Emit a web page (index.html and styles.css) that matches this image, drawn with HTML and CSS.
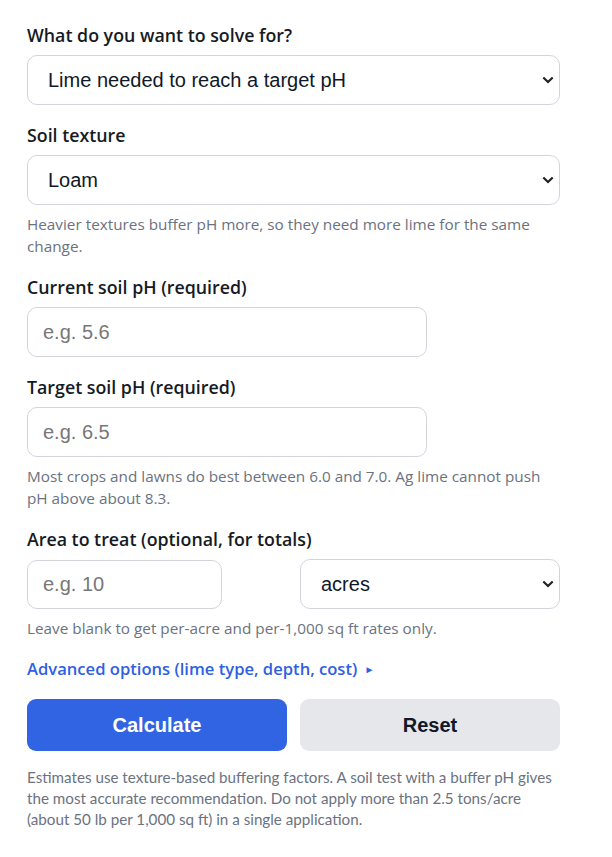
FILE: index.html
```html
<!DOCTYPE html>
<html lang="en">
<head>
<meta charset="utf-8">
<title>Lime calculator</title>
<link rel="stylesheet" href="styles.css">
</head>
<body>
<form class="calc">
  <div class="field">
    <label class="label" for="solve">What do you want to solve for?</label>
    <select id="solve" class="control select">
      <option>Lime needed to reach a target pH</option>
    </select>
  </div>
  <div class="field">
    <label class="label" for="texture">Soil texture</label>
    <select id="texture" class="control select">
      <option>Loam</option>
    </select>
    <p class="help">Heavier textures buffer pH more, so they need more lime for the same change.</p>
  </div>
  <div class="field">
    <label class="label" for="cur">Current soil pH (required)</label>
    <input id="cur" class="control input short" type="text" placeholder="e.g. 5.6">
  </div>
  <div class="field">
    <label class="label" for="tgt">Target soil pH (required)</label>
    <input id="tgt" class="control input short" type="text" placeholder="e.g. 6.5">
    <p class="help">Most crops and lawns do best between 6.0 and 7.0. Ag lime cannot push pH above about 8.3.</p>
  </div>
  <div class="field">
    <label class="label" for="area">Area to treat (optional, for totals)</label>
    <div class="area-row">
      <input id="area" class="control input area" type="text" placeholder="e.g. 10">
      <select class="control select units">
        <option>acres</option>
      </select>
    </div>
    <p class="help">Leave blank to get per-acre and per-1,000 sq ft rates only.</p>
  </div>
  <div class="advanced">Advanced options (lime type, depth, cost) <span class="tri">&#9658;</span></div>
  <div class="buttons">
    <button type="button" class="btn primary">Calculate</button>
    <button type="button" class="btn secondary">Reset</button>
  </div>
  <p class="note">Estimates use texture-based buffering factors. A soil test with a buffer pH gives the most accurate recommendation. Do not apply more than 2.5 tons/acre (about 50 lb per 1,000 sq ft) in a single application.</p>
</form>
</body>
</html>
```
FILE: styles.css
```css
html, body {
  margin: 0;
  padding: 0;
  background: #ffffff;
}
.calc {
  width: 533px;
  margin: 0 0 0 27px;
  padding-top: 23px;
  font-family: "Open Sans", "Noto Sans", sans-serif;
  color: #111827;
}
.field {
  margin-bottom: 18px;
}
.label {
  display: block;
  font-size: 17.8px;
  font-weight: 600;
  line-height: 24px;
  margin-bottom: 8px;
  color: #151a23;
}
.control {
  box-sizing: border-box;
  height: 50px;
  border: 1px solid #d1d5db;
  border-radius: 10px;
  background-color: #ffffff;
  font-family: "Liberation Sans", Arial, sans-serif;
  font-size: 20px;
  color: #111827;
  display: block;
}
.select {
  width: 100%;
  padding: 0 24px 0 20px;
  -webkit-appearance: none;
  appearance: none;
  background-image: url("data:image/svg+xml,%3Csvg xmlns='http://www.w3.org/2000/svg' width='12' height='8' viewBox='0 0 12 8'%3E%3Cpath d='M1.3 1.5 L6 6 L10.7 1.5' fill='none' stroke='%23222' stroke-width='2.2'/%3E%3C/svg%3E");
  background-repeat: no-repeat;
  background-position: right 5px center;
  background-size: 12px 8px;
}
.input {
  padding: 0 15px;
}
.input::placeholder {
  color: #777777;
}
.short {
  width: 400px;
}
.area-row {
  display: flex;
  justify-content: space-between;
  align-items: center;
}
.area {
  width: 195px;
  height: 49px;
}
.units {
  width: 260px;
}
.help {
  margin: 8px 0 0;
  font-size: 15.3px;
  line-height: 22px;
  color: #6b7280;
}
.advanced {
  font-size: 16.6px;
  font-weight: 600;
  line-height: 24px;
  color: #2f5fe3;
}
.tri {
  font-size: 10px;
  margin-left: 3px;
  vertical-align: 2px;
}
.buttons {
  display: grid;
  grid-template-columns: 1fr 1fr;
  gap: 13px;
  margin-top: 18px;
}
.btn {
  height: 52px;
  border: none;
  border-radius: 9px;
  font-family: "Liberation Sans", Arial, sans-serif;
  font-size: 20px;
  font-weight: 700;
}
.primary {
  background: #3164e2;
  color: #ffffff;
}
.secondary {
  background: #e5e7eb;
  color: #111827;
}
.note {
  margin: 16px 0 0;
  font-family: Lato, "Open Sans", sans-serif;
  font-size: 15.2px;
  line-height: 21px;
  color: #6b7280;
}
```
